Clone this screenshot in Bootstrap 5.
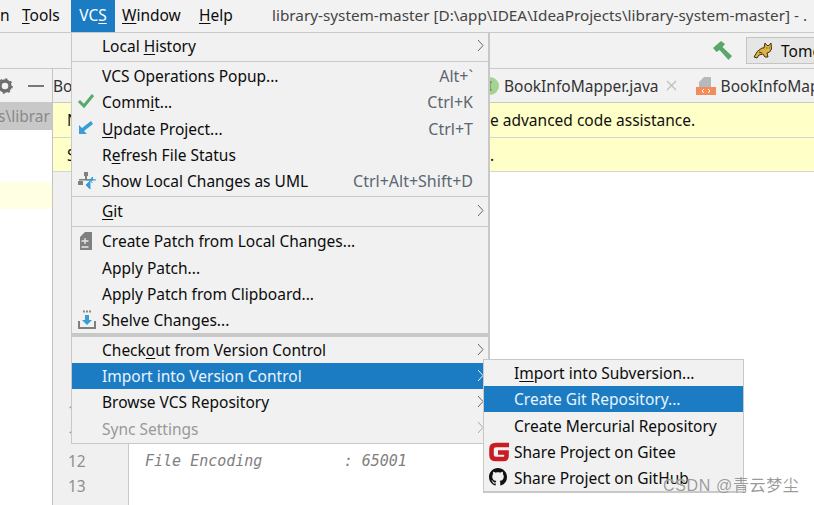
<!DOCTYPE html>
<html lang="en"><head><meta charset="utf-8"><title>VCS menu</title>
<link href="https://cdn.jsdelivr.net/npm/bootstrap@5.3.0/dist/css/bootstrap.min.css" rel="stylesheet">
<style>
html,body{height:100%;margin:0;overflow:hidden;background:#fff}
body{font-family:"Noto Sans","Liberation Sans",sans-serif;font-size:15.5px;color:#0c0c0c;line-height:20px}
u{text-underline-offset:2px;text-decoration-thickness:1px}
.ide{width:814px;height:505px;overflow:hidden}
.menubar{height:33px;background:#f2f2f2;border-bottom:1px solid #c9c9c9;white-space:nowrap}
.menubar>span{flex:none;margin-top:-2px}
.mb-n{width:22px}
.menubar>.mb-vcs{width:44px;height:32px;background:#1b7cc4;color:#fff;margin:0 7px 0 0;text-align:center;line-height:30px}
.mb-tools{width:49px}
.mb-window{width:77px}
.mb-help{width:73px}
.ptitle{color:#444;font-size:15.3px}
.toolbar{height:36px;background:#f2f2f2;border-bottom:1px solid #c9c9c9;padding-left:713px}
.toolbar>svg{flex:none}
.runcfg{margin-left:13px;width:100px;height:27px;flex:none;background:#e6e6e6;border:1px solid #c4c4c4;padding-left:6px;white-space:nowrap}
.runcfg svg{flex:none}
.workarea{height:436px}
.sidepane{width:53px;flex:none;border-right:1px solid #c4c4c4;background:#fff;overflow:hidden}
.sidehead{height:34px;background:#f2f2f2;border-bottom:1px solid #c9c9c9}
.sidehead svg{flex:none}
.sidehead .minus{margin-left:14px}
.sidesel{height:27px;background:#c8c8c8;color:#888;white-space:nowrap;line-height:27px;overflow:hidden}
.sidesel span{margin-left:-2px;display:block}
.sidewarm{height:27px;background:#ffffe4;margin-top:52px}
.tabs{height:34px;background:#f2f2f2;border-bottom:1px solid #c9c9c9;white-space:nowrap;color:#333}
.tabs>*{flex:none}
.tab-a{width:18px;overflow:hidden}
.tab-g{margin-left:410px}
.tab-t{margin-left:5px}
.tab-x{margin-left:7px}
.tab-m{margin-left:19px}
.banner{height:35px;background:#ffffc8;border-bottom:1px solid #d5d5d5;padding-left:14px;white-space:nowrap;color:#111;line-height:34px}
.banner2{height:34px}
.b-lead{flex:none;width:423px}
.editor{height:333px}
.gutter{width:76px;flex:none;background:#f0f0f0;border-right:1px solid #c9c9c9;color:#8f8f8f;padding:227px 0 0 15px;line-height:25px}
.codepane{padding:227px 0 0 16px;font-family:"DejaVu Sans Mono",monospace;font-style:italic;font-size:15px;line-height:25px;color:#808080;white-space:pre}
.popup{position:absolute;background:#f1f1f1;border:1px solid #c8c8c8;white-space:nowrap;z-index:5}
.vcsmenu{left:71px;top:32px;width:419px;height:412px;border-right-width:2px}
.submenu{left:483px;top:359px;width:261px;height:134px;z-index:6;border-bottom-width:2px}
.mi{height:26.2px;padding:0 8px 0 30px;position:relative}
.mi.on{background:#1b7cc4;color:#eaf4fb}
.mi.off{color:#999}
.mi.nudge{padding-top:2px}
.mi .sc{color:#5b6670;margin-right:7px;font-size:16px}
.chev{position:absolute;right:4px;top:7px}
.ico{position:absolute;left:5px;top:3px}
.sep{height:3px;border-bottom:1px solid #c8c8c8;margin-bottom:1px}
.sep-thick{height:3.6px;background:#c8c8c8}
.wm{position:absolute;left:663px;top:476px;z-index:7;color:rgba(120,120,120,.75);font-size:16px;letter-spacing:.65px;font-family:"Liberation Sans","Noto Sans CJK SC",sans-serif;text-shadow:0 0 1px #fff}
</style></head><body>
<div class="ide position-relative">
 <div class="menubar d-flex align-items-center">
  <span class="mb-n">n</span><span class="mb-tools"><u>T</u>ools</span><span class="mb-vcs">VC<u>S</u></span><span class="mb-window"><u>W</u>indow</span><span class="mb-help"><u>H</u>elp</span><span class="ptitle">library-system-master [D:\app\IDEA\IdeaProjects\library-system-master] - .</span>
 </div>
 <div class="toolbar d-flex align-items-center">
  <svg width="20" height="20" viewBox="0 0 20 20"><path d="M0 7 L8 0 L12 3 L9.500 6 L19 15 L15.500 19 L6.500 9 L3.500 11 Z" fill="#59a869"/></svg>
  <div class="runcfg d-flex align-items-center gap-1">
   <svg width="20" height="18" viewBox="0 0 20 18"><path d="M1 15 Q4 8 9 6 L11 6 L12 1 L14 3.500 L16 3.500 L18 1 L18.500 7 Q17 11 14 11 L15 15 L12 15 L10 12 L6 13 L4 16 Z" fill="#e0b13f" stroke="#3d3216" stroke-width="1"/><path d="M13.500 6h.8M16 6h.8M6 10l3 1" stroke="#3d3216" stroke-width="1"/></svg>
   <span class="ms-1">Tomcat</span>
  </div>
 </div>
 <div class="workarea d-flex">
  <aside class="sidepane">
   <div class="sidehead d-flex align-items-center">
    <svg width="14" height="16" viewBox="0 0 14 16"><circle cx="5" cy="8" r="5" fill="none" stroke="#6e6e6e" stroke-width="3.4"/><circle cx="5" cy="8" r="7" fill="none" stroke="#6e6e6e" stroke-width="1.6" stroke-dasharray="2.2 3.3"/></svg>
    <svg class="minus" width="16" height="2" viewBox="0 0 16 2"><rect width="16" height="2" fill="#777"/></svg>
   </div>
   <div class="sidesel"><span>s\librar</span></div>
   <div class="sidewarm"></div>
  </aside>
  <div class="flex-grow-1 overflow-hidden">
   <div class="tabs d-flex align-items-center">
    <span class="tab-a">Bo</span>
    <svg class="tab-g" width="18" height="18" viewBox="0 0 18 18"><circle cx="9" cy="9" r="9" fill="#a5d391"/><path d="M7 5h4M7 13h4M9 5v8" stroke="#5a7f4a" stroke-width="1"/></svg>
    <span class="tab-t">BookInfoMapper.java</span>
    <svg class="tab-x" width="11" height="11" viewBox="0 0 11 11"><path d="M1 1l9 9M10 1l-9 9" stroke="#bdbdbd" stroke-width="1.2"/></svg>
    <svg class="tab-m" width="20" height="20" viewBox="0 0 20 20"><path d="M8 1h7v10H3V6Z" fill="#b4b9bd"/><rect y="11" width="20" height="8" fill="#f28c5a"/><path d="M8 13l-2 2 2 2M12 13l2 2-2 2" fill="none" stroke="#fff" stroke-width="1"/></svg>
    <span class="tab-t">BookInfoMap</span>
   </div>
   <div class="banner d-flex"><span class="b-lead">N</span><span>e advanced code assistance.</span></div>
   <div class="banner banner2 d-flex"><span class="b-lead">S</span><span>.</span></div>
   <div class="editor d-flex">
    <div class="gutter">1<br>1<br>12<br>13</div>
    <div class="codepane">
   g
File Encoding         : 65001</div>
   </div>
  </div>
 </div>

 <div class="popup vcsmenu">
  <div class="mi d-flex align-items-center"><span>Local <u>H</u>istory</span><svg class="chev" width="7" height="11" viewBox="0 0 7 11"><path d="M1 0l5 5.5-5 5.5" fill="none" stroke="#666"/></svg></div>
  <div class="sep"></div>
  <div class="mi d-flex align-items-center justify-content-between"><span>VCS Operations Popup...</span><span class="sc">Alt+`</span></div>
  <div class="mi d-flex align-items-center justify-content-between"><svg class="ico" width="18" height="18" viewBox="0 0 18 18"><path d="M2 9l5 5L16 3" fill="none" stroke="#59a869" stroke-width="3"/></svg><span>Comm<u>i</u>t...</span><span class="sc">Ctrl+K</span></div>
  <div class="mi d-flex align-items-center justify-content-between"><svg class="ico" width="18" height="18" viewBox="0 0 18 18"><path d="M2 15V6l3 3 9-7 2 3-9 7 3 3Z" fill="#389fd6"/></svg><span><u>U</u>pdate Project...</span><span class="sc">Ctrl+T</span></div>
  <div class="mi d-flex align-items-center"><span>R<u>e</u>fresh File Status</span></div>
  <div class="mi d-flex align-items-center justify-content-between"><svg class="ico" width="20" height="20" viewBox="0 0 20 20"><path d="M7 1h4v4H7zM2 8h14v1.5H2zM8 5h2v3H8zM1 10h5v4H1z" fill="#7f7f7f"/><path d="M19 9h-6l2.5-3v2M13 9l2.500 3M9 9h6M9 14l4-4v8Z" fill="#389fd6" stroke="#389fd6"/></svg><span>Show Local Changes as UML</span><span class="sc">Ctrl+Alt+Shift+D</span></div>
  <div class="sep"></div>
  <div class="mi d-flex align-items-center"><span><u>G</u>it</span><svg class="chev" width="7" height="11" viewBox="0 0 7 11"><path d="M1 0l5 5.5-5 5.5" fill="none" stroke="#666"/></svg></div>
  <div class="sep"></div>
  <div class="mi d-flex align-items-center"><svg class="ico" width="18" height="20" viewBox="0 0 18 20"><path d="M8 1h7v18H3V6Z" fill="#808080"/><path d="M4.500 10h7M8 7v6M4.500 16h7" stroke="#e8e8e8" stroke-width="1.300"/></svg><span>Create Patch from Local Changes...</span></div>
  <div class="mi d-flex align-items-center"><span>Apply Patch...</span></div>
  <div class="mi d-flex align-items-center"><span>Apply Patch from Clipboard...</span></div>
  <div class="mi d-flex align-items-center"><svg class="ico" width="20" height="20" viewBox="0 0 20 20"><path d="M1 11v8h18v-8h-2v6H3v-6Z" fill="#7f7f7f"/><path d="M8 5h4v5h3l-5 5-5-5h3Z" fill="#389fd6"/><path d="M6 1.500h2M9 1.500h2M12 1.500h2" stroke="#8a8a8a" stroke-width="2"/></svg><span>Shelve Changes...</span></div>
  <div class="sep-thick"></div>
  <div class="mi d-flex align-items-center"><span>Check<u>o</u>ut from Version Control</span><svg class="chev" width="7" height="11" viewBox="0 0 7 11"><path d="M1 0l5 5.5-5 5.5" fill="none" stroke="#666"/></svg></div>
  <div class="mi on d-flex align-items-center"><span>Import into Version Control</span><svg class="chev" width="7" height="11" viewBox="0 0 7 11"><path d="M1 0l5 5.5-5 5.500" fill="none" stroke="#dff"/></svg></div>
  <div class="mi d-flex align-items-center"><span>Browse VCS Repository</span><svg class="chev" width="7" height="11" viewBox="0 0 7 11"><path d="M1 0l5 5.5-5 5.5" fill="none" stroke="#666"/></svg></div>
  <div class="mi off nudge d-flex align-items-center"><span>Sync Settings</span><svg class="chev" width="7" height="11" viewBox="0 0 7 11"><path d="M1 0l5 5.5-5 5.5" fill="none" stroke="#aaa"/></svg></div>
 </div>

 <div class="popup submenu">
  <div class="mi d-flex align-items-center"><span>I<u>m</u>port into Subversion...</span></div>
  <div class="mi on d-flex align-items-center"><span>Create Git Repository...</span></div>
  <div class="mi nudge d-flex align-items-center"><span>Create Mercurial Repository</span></div>
  <div class="mi d-flex align-items-center"><svg class="ico" width="20" height="20" viewBox="0 0 20 20"><path d="M20 3H7Q2.500 3 2.500 7v6Q2.500 17 7 17h7.500Q17.500 17 17.500 14v-3.500H9" fill="none" stroke="#c71d23" stroke-width="4.600"/></svg><span>Share Project on Gitee</span></div>
  <div class="mi d-flex align-items-center"><svg class="ico" width="18" height="18" viewBox="0 0 16 16"><path fill="#111" d="M8 0C3.580 0 0 3.580 0 8c0 3.540 2.290 6.530 5.470 7.590.4.070.55-.17.55-.38 0-.19-.01-.82-.01-1.490-2.010.37-2.530-.49-2.690-.94-.09-.23-.48-.94-.82-1.130-.28-.15-.68-.52-.01-.53.63-.01 1.080.58 1.230.82.72 1.210 1.870.87 2.330.66.070-.52.28-.87.51-1.070-1.780-.2-3.640-.89-3.640-3.950 0-.87.31-1.590.82-2.150-.08-.2-.36-1.020.08-2.120 0 0 .67-.21 2.200.82.64-.18 1.320-.27 2-.27.68 0 1.360.09 2 .27 1.530-1.040 2.200-.82 2.200-.82.44 1.100.16 1.920.08 2.120.51.56.82 1.270.82 2.150 0 3.070-1.870 3.750-3.650 3.950.29.25.54.73.54 1.480 0 1.070-.01 1.930-.01 2.200 0 .21.15.46.55.38A8.013 8.013 0 0016 8c0-4.420-3.580-8-8-8z"/></svg><span>Share Project on GitHub</span></div>
 </div>
 <div class="wm">CSDN @青云梦尘</div>
</div>
<script src="https://cdn.jsdelivr.net/npm/bootstrap@5.3.0/dist/js/bootstrap.bundle.min.js"></script>
</body></html>
